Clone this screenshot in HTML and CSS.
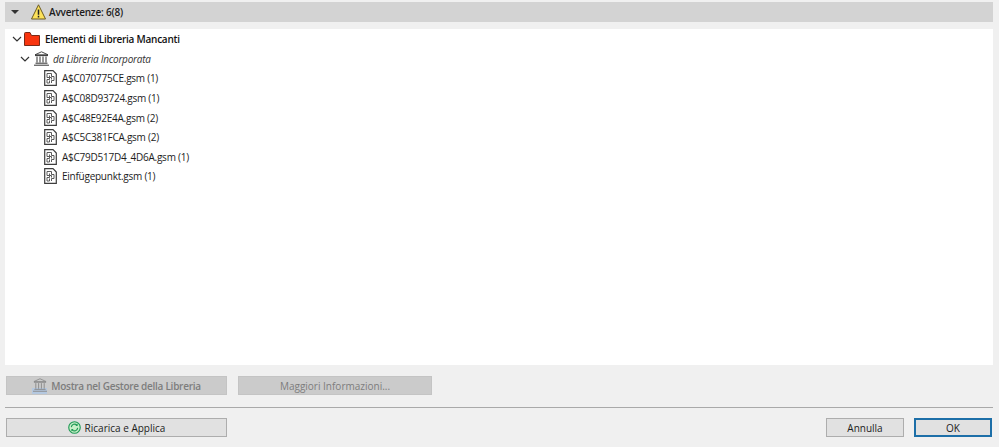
FILE: index.html
```html
<!DOCTYPE html>
<html lang="it">
<head>
<meta charset="utf-8">
<title>Avvertenze</title>
<link rel="stylesheet" href="styles.css">
</head>
<body>
<svg class="defs" width="0" height="0" aria-hidden="true">
  <symbol id="doc" viewBox="0 0 13 16">
    <path d="M.7 .7H9L12.3 4V15.3H.7Z" fill="#fff" stroke="#3d3d3d" stroke-width="1.2"/>
    <path d="M3 3.5H7.5V6.5H10V10.5H7.5V13M3 3.5V7.5H5.5V9.5H3V13H5.5V10.5M5.5 5.5V7.5H7.5V9.5" fill="none" stroke="#4a4a4a" stroke-width=".9"/>
  </symbol>
  <symbol id="bank" viewBox="0 0 15 15">
    <path d="M7.5 .8 1 3.8H14Z" fill="none" stroke="currentColor" stroke-width=".9"/>
    <path d="M1 4.6H14M3 5.5V11.5M6 5.5V11.5M9 5.5V11.5M12 5.5V11.5M1.5 12.2H13.5M0 14.2H15" fill="none" stroke="currentColor" stroke-width="1"/>
  </symbol>
</svg>
<header class="bar">
  <span class="bar-arrow"></span>
  <svg class="warn" viewBox="0 0 15 16" width="15" height="16" aria-hidden="true">
    <path d="M7.5 .8 14.5 15H.5Z" fill="#fde25a" stroke="#6b5a20" stroke-width="1"/>
    <path d="M7.5 5.5V10.8M7.5 11.8V13.6" stroke="#222" stroke-width="1.5"/>
  </svg>
  <span class="bar-title">Avvertenze: 6(8)</span>
</header>
<main class="panel">
  <div class="row lvl0">
    <svg class="chev" viewBox="0 0 10 6" width="10" height="6" aria-hidden="true"><path d="M1 1 5 5 9 1" fill="none" stroke="#333" stroke-width="1.2"/></svg>
    <svg class="folder" viewBox="0 0 16 14" width="16" height="14" aria-hidden="true">
      <path d="M.5 13.5V1.5Q.5.5 1.5.5H6L7.5 3.5H15.5V13.5Z" fill="#f8350f" stroke="#7a2a18"/>
    </svg>
    <span class="strong">Elementi di Libreria Mancanti</span>
  </div>
  <div class="row lvl1">
    <svg class="chev" viewBox="0 0 10 6" width="10" height="6" aria-hidden="true"><path d="M1 1 5 5 9 1" fill="none" stroke="#333" stroke-width="1.2"/></svg>
    <svg class="bank" width="15" height="15" aria-hidden="true"><use href="#bank"/></svg>
    <span class="ital">da Libreria Incorporata</span>
  </div>
  <div class="row lvl2"><svg class="doc" width="13" height="16" aria-hidden="true"><use href="#doc"/></svg><span>A$C070775CE.gsm (1)</span></div>
  <div class="row lvl2"><svg class="doc" width="13" height="16" aria-hidden="true"><use href="#doc"/></svg><span>A$C08D93724.gsm (1)</span></div>
  <div class="row lvl2"><svg class="doc" width="13" height="16" aria-hidden="true"><use href="#doc"/></svg><span>A$C48E92E4A.gsm (2)</span></div>
  <div class="row lvl2"><svg class="doc" width="13" height="16" aria-hidden="true"><use href="#doc"/></svg><span>A$C5C381FCA.gsm (2)</span></div>
  <div class="row lvl2"><svg class="doc" width="13" height="16" aria-hidden="true"><use href="#doc"/></svg><span>A$C79D517D4_4D6A.gsm (1)</span></div>
  <div class="row lvl2"><svg class="doc" width="13" height="16" aria-hidden="true"><use href="#doc"/></svg><span>Einfügepunkt.gsm (1)</span></div>
</main>
<div class="actions">
  <button class="btn disabled wide" type="button">
    <svg class="ghost" viewBox="0 0 16 16" width="16" height="16" aria-hidden="true">
      <rect x="0" y="10" width="15" height="6" fill="#b4c8e0"/>
      <use href="#bank" x="1" y="0" width="14" height="14"/>
    </svg>
    <span>Mostra nel Gestore della Libreria</span>
  </button>
  <button class="btn disabled info" type="button">Maggiori Informazioni...</button>
</div>
<hr class="sep">
<footer class="footer">
  <button class="btn wide" type="button">
    <svg viewBox="0 0 14 14" width="13" height="13" aria-hidden="true">
      <circle cx="7" cy="7" r="6.2" fill="#c8efc8" stroke="#1f9a55" stroke-width="1.2"/>
      <path d="M3.6 6.6A3.5 3.5 0 0 1 9.6 4.4M10.4 7.4A3.5 3.5 0 0 1 4.4 9.6" fill="none" stroke="#1f9a55" stroke-width="1.2"/>
      <path d="M10.4 2.8V5.4H7.9ZM3.6 11.2V8.6H6.1Z" fill="#1f9a55"/>
    </svg>
    Ricarica e Applica
  </button>
  <div class="spacer"></div>
  <button class="btn cancel" type="button">Annulla</button>
  <button class="btn ok" type="button">OK</button>
</footer>
</body>
</html>
```

FILE: styles.css
```css
* { box-sizing: border-box; }
html, body { height: 100%; }
body {
  margin: 0;
  padding: 2px 6px 0 5px;
  background: #f0f0f0;
  color: #1c1c1c;
  font: 10px/14px "Open Sans", "Noto Sans", sans-serif;
  overflow: hidden;
}
.defs { position: absolute; }
.bar {
  height: 20px;
  background: #d3d3d3;
  display: flex;
  align-items: center;
  padding-left: 6px;
}
.bar-arrow {
  width: 0;
  height: 0;
  border-left: 4px solid transparent;
  border-right: 4px solid transparent;
  border-top: 4px solid #333;
  margin-right: 12px;
}
.warn { margin-right: 3px; }
.bar-title { font-weight: 600; letter-spacing: -.2px; }
.panel {
  margin-top: 7px;
  height: 336px;
  background: #fff;
  padding-top: 0.5px;
  letter-spacing: -.25px;
}
.row {
  height: 19.6px;
  display: flex;
  align-items: center;
  white-space: nowrap;
}
.lvl0 { padding-left: 7px; }
.lvl1 { padding-left: 15px; }
.lvl2 { padding-left: 39px; }
.chev { margin-right: 2px; }
.lvl1 .chev { margin-right: 4px; }
.folder { margin-right: 5px; }
.bank { color: #333; margin-right: 4px; }
.doc { margin-right: 5px; }
.strong { font-weight: 600; color: #111; }
.ital { font-style: italic; color: #333; }
.actions {
  margin-top: 11px;
  padding-left: 1px;
  display: flex;
  gap: 11px;
}
.btn {
  height: 19px;
  padding: 0;
  border: 1px solid #adadad;
  background: #e1e1e1;
  color: #1c1c1c;
  font: inherit;
  display: flex;
  align-items: center;
  justify-content: center;
  gap: 4px;
}
.wide { width: 221px; }
.info { width: 194px; }
.disabled {
  background: #cbcbcb;
  border-color: #c4c4c4;
  color: #7d7d7d;
}
.disabled.wide { font-weight: 600; letter-spacing: -.27px; gap: 3px; }
.ghost { color: #8a8a8a; }
.sep {
  margin: 12px 0 0;
  border: 0;
  height: 1px;
  background: #a9a9a9;
}
.footer {
  margin-top: 10px;
  padding: 0 1px;
  display: flex;
  gap: 10px;
}
.spacer { flex: 1; }
.cancel { width: 78px; }
.ok {
  width: 78px;
  border: 2px solid #1d6fa8;
}
```
